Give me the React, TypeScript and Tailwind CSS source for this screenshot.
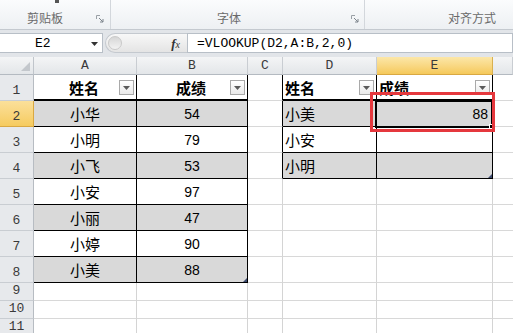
import React from 'react';

const cols = ['w-[103px]', 'w-[111px]', 'w-[35px]', 'w-[94px]', 'w-[116px]', 'flex-1'];
const letters = ['A', 'B', 'C', 'D', 'E', ''];

const cjk = { fontFamily: '"Noto Sans CJK SC", "Liberation Sans", sans-serif' };
const num = { fontFamily: '"Liberation Sans", "Noto Sans CJK SC", sans-serif' };
const mono = { fontFamily: '"Liberation Mono", "DejaVu Sans Mono", monospace' };

type Cell = { t: string; bold?: boolean; align: 'c' | 'l' | 'r'; filter?: boolean; isNum?: boolean };

const t1: [string, string][] = [
  ['小华', '54'],
  ['小明', '79'],
  ['小飞', '53'],
  ['小安', '97'],
  ['小丽', '47'],
  ['小婷', '90'],
  ['小美', '88'],
];
const t2: [string, string][] = [
  ['小美', '88'],
  ['小安', ''],
  ['小明', ''],
];

function getCell(r: number, c: number): Cell | null {
  if (c === 0 || c === 1) {
    if (r === 1) return { t: c === 0 ? '姓名' : '成绩', bold: true, align: 'c', filter: true };
    if (r <= 8) return { t: t1[r - 2][c], align: 'c', isNum: c === 1 };
  }
  if (c === 3 || c === 4) {
    if (r === 1) return { t: c === 3 ? '姓名' : '成绩', bold: true, align: 'l', filter: true };
    if (r <= 4) return { t: t2[r - 2][c - 3], align: c === 3 ? 'l' : 'r', isNum: c === 4 };
  }
  return null;
}

function FilterBtn() {
  return (
    <div className="absolute right-[2px] bottom-[4px] w-[15px] h-[15px] border border-[#a9a9a9] bg-linear-to-b from-white to-[#e9e9e9] flex items-center justify-center">
      <svg width="7" height="4" viewBox="0 0 7 4">
        <path d="M0 0 H7 L3.5 4 Z" fill="#5a5a5a" />
      </svg>
    </div>
  );
}

function Row({ r }: { r: number }) {
  const h = r <= 8 ? 'h-[26px]' : 'h-[18px]';
  const hl = r === 2;
  return (
    <div className={`flex ${h}`}>
      <div
        className={`w-[34px] shrink-0 flex items-end justify-center pb-[3px] border-r border-b text-[13px] leading-none text-[#3a3a3a] ${
          hl
            ? 'bg-linear-to-b from-[#fbe09a] to-[#f6cb5e] border-r-[#d9a842] border-b-[#d9a842]'
            : 'bg-[#e7e9ec] border-r-[#b7bcc2] border-b-[#c9cdd2]'
        }`}
        style={mono}
      >
        {r}
      </div>
      {cols.map((w, c) => {
        const inT1 = (c === 0 || c === 1) && r <= 8;
        const inT2 = (c === 3 || c === 4) && r <= 4;
        const inT = inT1 || inT2;
        const blackRight = inT || (c === 2 && r <= 4);
        const gray = inT && r % 2 === 0;
        const cell = getCell(r, c);
        const rightCls = c === 5 ? '' : blackRight ? 'border-r border-r-black' : 'border-r border-r-[#d4d4d4]';
        const bottomCls = inT
          ? r === 1
            ? 'border-b-2 border-b-black'
            : 'border-b border-b-black'
          : 'border-b border-b-[#d8d8d8]';
        const alignCls =
          cell?.align === 'c' ? 'justify-center' : cell?.align === 'r' ? 'justify-end pr-[4px]' : 'justify-start pl-[2px]';
        return (
          <div
            key={c}
            className={`${w} shrink-0 relative flex items-center ${alignCls} ${rightCls} ${bottomCls} ${
              gray ? 'bg-[#d9d9d9]' : 'bg-white'
            }`}
          >
            {cell && cell.t && (
              <span
                className={`${cell.isNum ? 'text-[14px]' : 'text-[15px]'} ${
                  cell.bold ? 'font-bold' : 'font-normal'
                } text-black leading-none ${cell.align === 'c' && cell.filter ? 'mr-[2px]' : ''}`}
                style={cell.isNum ? num : cjk}
              >
                {cell.t}
              </span>
            )}
            {cell?.filter && <FilterBtn />}
            {r === 8 && c === 1 && (
              <svg className="absolute right-0 bottom-0" width="4" height="4" viewBox="0 0 4 4">
                <path d="M4 0 V4 H0 Z" fill="#3c4a6e" />
              </svg>
            )}
            {r === 4 && c === 4 && (
              <svg className="absolute right-0 bottom-0" width="4" height="4" viewBox="0 0 4 4">
                <path d="M4 0 V4 H0 Z" fill="#3c4a6e" />
              </svg>
            )}
          </div>
        );
      })}
    </div>
  );
}

function Launcher() {
  return (
    <svg width="8" height="8" viewBox="0 0 8 8" className="shrink-0">
      <path d="M0.5 4 V0.5 H4" stroke="#9aa0a6" strokeWidth="1" fill="none" />
      <path d="M3 3 L7 7 M7 4 V7 H4" stroke="#7d848c" strokeWidth="1" fill="none" />
    </svg>
  );
}

export default function App() {
  return (
    <div className="w-[513px] h-[333px] overflow-hidden relative bg-white">
      {/* Ribbon */}
      <div className="h-[30px] flex bg-linear-to-b from-[#fbfcfd] to-[#edf0f3] border-b border-b-[#c4c9cf]">
        <div className="w-[111px] shrink-0 relative flex items-end pb-[5px] pl-[27px] pr-[6px] border-r border-r-[#d3d7dc]">
          <div className="absolute left-[55px] top-0 w-[4px] h-[3px] bg-[#555]" />
          <span className="text-[12px] leading-none text-[#6a6a6a]" style={cjk}>
            剪贴板
          </span>
          <div className="ml-auto mb-[1px]">
            <Launcher />
          </div>
        </div>
        <div className="w-[254px] shrink-0 flex items-end pb-[5px] pl-[106px] pr-[5px] border-r border-r-[#d3d7dc]">
          <span className="text-[12px] leading-none text-[#6a6a6a]" style={cjk}>
            字体
          </span>
          <div className="ml-auto mb-[1px]">
            <Launcher />
          </div>
        </div>
        <div className="flex-1 flex items-end pb-[5px] pl-[83px]">
          <span className="text-[12px] leading-none text-[#6a6a6a]" style={cjk}>
            对齐方式
          </span>
        </div>
      </div>

      {/* Formula bar */}
      <div className="h-[27px] bg-[#e2e5e9] flex items-start pt-[3px]">
        <div className="w-[103px] shrink-0 h-[20px] bg-white border-y border-r border-[#b8bfc7] relative flex items-center">
          <span className="ml-[35px] text-[13px] leading-none text-black" style={mono}>
            E2
          </span>
          <svg className="absolute right-[4px] top-[8px]" width="7" height="4" viewBox="0 0 7 4">
            <path d="M0 0 H7 L3.5 4 Z" fill="#333" />
          </svg>
        </div>
        <div className="w-[82px] shrink-0 h-[20px] ml-[2px] rounded-l-full bg-linear-to-b from-[#f8f8f8] to-[#e4e4e4] border-y border-l border-[#c4c9cf] flex items-center">
          <div className="w-[14px] h-[14px] ml-[2px] rounded-full bg-linear-to-b from-[#d6d6d6] to-[#f3f3f3] border border-[#c9c9c9]" />
          <span className="ml-auto mr-[7px] italic text-[13px] leading-none text-[#333]" style={{ fontFamily: '"Liberation Serif", serif' }}>
            <span className="font-bold">f</span>
            <span className="text-[10px]">x</span>
          </span>
        </div>
        <div className="flex-1 h-[20px] bg-white border border-[#b8bfc7] flex items-center pl-[9px]">
          <span className="text-[13px] leading-none text-black" style={mono}>
            =VLOOKUP(D2,A:B,2,0)
          </span>
        </div>
      </div>

      {/* Column headers */}
      <div className="flex h-[18px]">
        <div className="w-[34px] shrink-0 relative bg-linear-to-b from-[#f4f5f6] to-[#e3e6e9] border-r border-b border-r-[#c0c5cb] border-b-[#b4bac1]">
          <svg className="absolute right-[3px] bottom-[3px]" width="9" height="9" viewBox="0 0 9 9">
            <path d="M9 0 V9 H0 Z" fill="#c3c7cc" />
          </svg>
        </div>
        {cols.map((w, c) => (
          <div
            key={c}
            className={`${w} shrink-0 flex items-center justify-center border-b text-[13px] leading-none text-[#3a3a3a] ${
              c === 4
                ? 'bg-linear-to-b from-[#fce7a8] to-[#f5c95a] border-b-[#d9a842] border-r border-r-[#d9b04f]'
                : 'bg-linear-to-b from-[#f4f5f6] to-[#e3e6e9] border-b-[#b4bac1] border-r border-r-[#c9cdd2]'
            }`}
            style={mono}
          >
            {letters[c]}
          </div>
        ))}
      </div>

      {/* Rows */}
      {Array.from({ length: 11 }, (_, i) => (
        <Row key={i} r={i + 1} />
      ))}

      {/* Active cell E2 */}
      <div className="absolute left-[375px] top-[100px] w-[118px] h-[28px] border-2 border-black pointer-events-none" />
      <div className="absolute left-[489px] top-[124px] w-[5px] h-[5px] bg-black border border-white pointer-events-none" />

      {/* Red highlight box */}
      <div className="absolute left-[370px] top-[92px] w-[125px] h-[40px] border-[3px] border-[#e5383d] pointer-events-none" />
    </div>
  );
}
